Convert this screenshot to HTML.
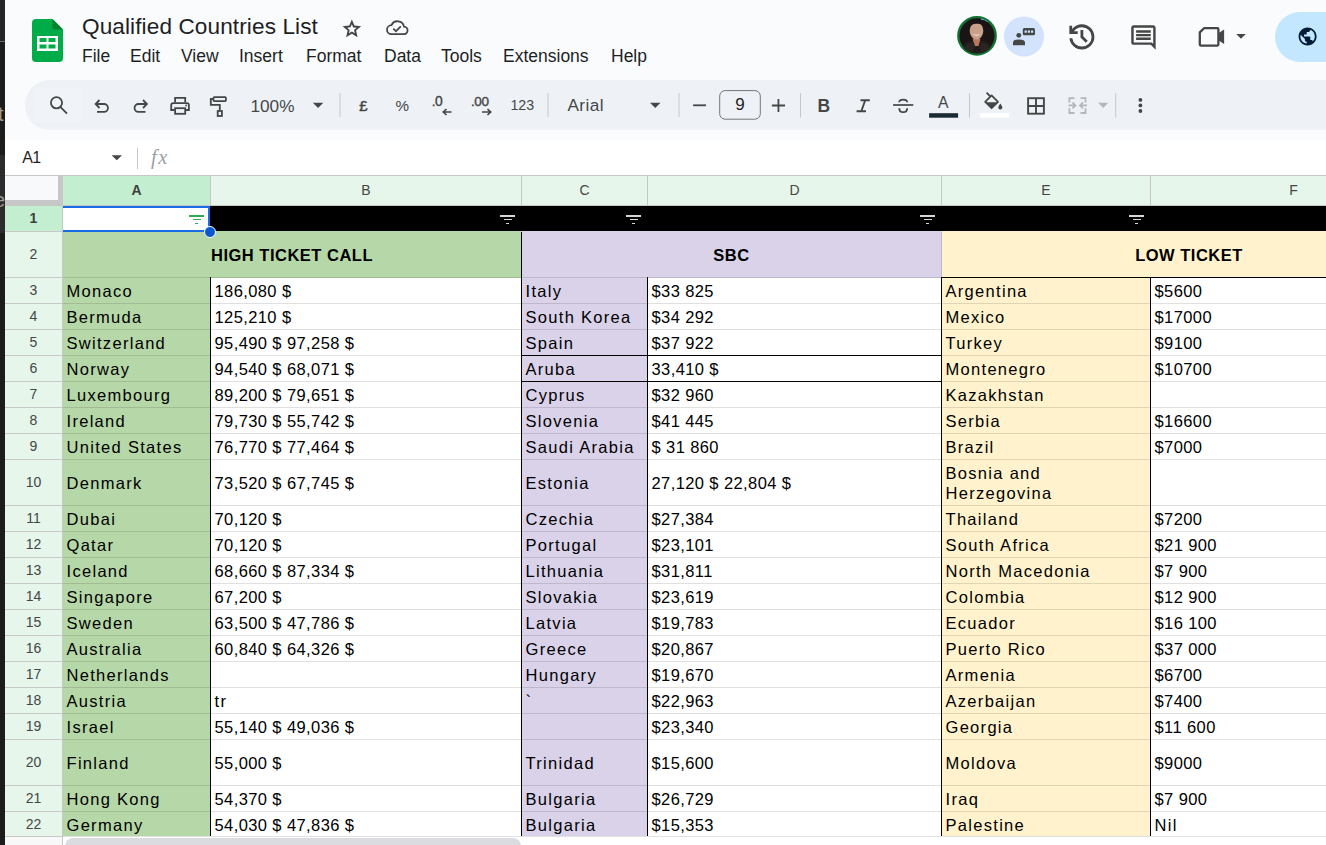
<!DOCTYPE html>
<html><head><meta charset="utf-8"><style>
*{margin:0;padding:0;box-sizing:border-box}
html,body{width:1326px;height:845px;overflow:hidden;background:#f9fbfd;font-family:"Liberation Sans",sans-serif;color:#1f1f1f;position:relative}
.abs{position:absolute}
#strip{position:absolute;left:0;top:0;width:5px;height:845px;background:#1c1c1c;overflow:hidden}
#title{position:absolute;left:82px;top:13.3px;font-size:22.6px;line-height:28px;color:#1f1f1f;white-space:nowrap;letter-spacing:0.1px}
.menu{position:absolute;top:45px;font-size:17.5px;line-height:22px;color:#1f1f1f;white-space:nowrap}
#toolbar{position:absolute;left:25px;top:80px;width:1400px;height:49.6px;border-radius:24.8px;background:#eef2f7}
.sep{position:absolute;top:93px;width:1px;height:24px;background:#c7c7c7}
.ic{position:absolute}
#fbar{position:absolute;left:5px;top:140px;width:1321px;height:35px;background:#fff}
#grid{position:absolute;left:0;top:0;width:1326px;height:845px}
.colhdr-bg{position:absolute;left:5px;top:175px;width:1321px;height:31px;background:#e6f6eb;border-top:1px solid #c7c7c7;border-bottom:1px solid #c7c7c7}
.ch{position:absolute;top:176px;height:29px;line-height:29px;text-align:center;font-size:14px;color:#444746;background:#e6f6eb}
.ch.sel{background:#c4eed0;color:#3c4043;font-weight:bold}
.vl{position:absolute;width:1px}
.hdrl{top:176px;height:29px;background:#c7c7c7}
.corner{position:absolute;left:5px;top:176px;width:58px;height:30px;background:#c7c7c7}
.corner:after{content:"";position:absolute;left:0;top:0;width:53px;height:24px;background:#f8f9fa}
.rh{position:absolute;left:5px;width:57px;text-align:center;font-size:14px;color:#444746;background:#e6f6eb}
.rh.sel{background:#c4eed0;color:#3c4043;font-weight:bold}
.hl{position:absolute;height:1px}
.rhl{left:5px;width:58px;background:#c7c7c7}
.cell{position:absolute;overflow:hidden;white-space:nowrap}
.tx{padding-left:3.5px;padding-top:1px;font-size:16.5px;letter-spacing:1.3px;color:#000}
.hdr{text-align:center;font-weight:bold;font-size:16.5px;letter-spacing:0.5px;color:#000;padding-top:1px}
.glv{position:absolute;width:1px;background:rgba(0,0,0,0.12)}
.glh{position:absolute;height:1px;background:rgba(0,0,0,0.12)}
.bk{position:absolute;background:#000}
.filt{position:absolute;width:15px;height:10px}
.filt i{position:absolute;height:1.4px;display:block}
.selbox{position:absolute;border:2px solid #1a73e8;box-sizing:content-box}
.handle{position:absolute;width:12px;height:12px;border-radius:50%;background:#0b57d0;border:1.5px solid #fff;box-sizing:border-box}
.hscroll{position:absolute;left:63px;width:1263px;height:20px;background:#fff;border-top:1px solid #e1e1e1}
.rhbot{position:absolute;left:5px;width:58px;height:20px;background:#f8f8f8;border-top:1px solid #c7c7c7;border-right:1px solid #c7c7c7}
.thumb{position:absolute;left:65px;width:456px;height:16px;border-radius:8px;background:#dadce0}

</style></head><body>
<div id="strip"><div style="position:absolute;left:0;top:0;width:5px;height:41px;background:#262626"></div><div style="position:absolute;left:0;top:41px;width:5px;height:1px;background:#6a6a6a"></div><div style="position:absolute;left:0;top:155px;width:5px;height:78px;background:#2c2c2c"></div><div style="position:absolute;left:-2px;top:102px;font-size:20px;line-height:24px;color:#9a9a9a">t</div><div style="position:absolute;left:-6px;top:188px;font-size:20px;line-height:24px;color:#9a9a9a">e</div></div>
<div id="toolbar"></div>
<div style="position:absolute;left:35px;top:88px;width:48px;height:34px;background:#f0f4f9"></div>
<div id="fbar"></div>
<svg style="position:absolute;left:0;top:0" width="1326" height="175" viewBox="0 0 1326 175">
<!-- logo -->
<path d="M36 19H52.5L63 29.5V58A4 4 0 0 1 59 62H36A4 4 0 0 1 32 58V23A4 4 0 0 1 36 19Z" fill="#00ac47"/>
<path d="M52.5 19L63 29.5H52.5Z" fill="#00832d"/>
<rect x="37" y="36" width="21" height="15" fill="#fff"/>
<rect x="39.5" y="38" width="7" height="4" fill="#00ac47"/><rect x="48.5" y="38" width="7" height="4" fill="#00ac47"/>
<rect x="39.5" y="44.5" width="7" height="4" fill="#00ac47"/><rect x="48.5" y="44.5" width="7" height="4" fill="#00ac47"/>
<!-- star -->
<path transform="translate(340.7,17.6) scale(0.93)" fill="#444746" d="m8.85 16.825 3.15-1.9 3.15 1.925-.825-3.6 2.775-2.4-3.65-.325-1.45-3.4-1.45 3.375-3.65.325 2.775 2.425ZM5.825 21l1.625-7.025L2 9.25l7.2-.625L12 2l2.8 6.625 7.2.625-5.450 4.725L18.175 21 12 17.275Z"/>
<!-- cloud -->
<path d="M391.5 34.2H403.5A3.8 3.8 0 0 0 404 26.6A6.6 6.6 0 0 0 391.5 25.2A4.5 4.5 0 0 0 391.5 34.2Z" fill="none" stroke="#444746" stroke-width="1.8"/>
<path d="M393.3 28.6L396 31.2L400.8 26.4" fill="none" stroke="#444746" stroke-width="1.7"/>
<!-- avatar -->
<defs><clipPath id="avc"><circle cx="977" cy="35.8" r="17.8"/></clipPath></defs>
<circle cx="977" cy="35.8" r="18.7" fill="#1a1514" stroke="#137333" stroke-width="2.3"/>
<g clip-path="url(#avc)">
<path d="M958 58Q959 45 968 41.5Q977 39 986 41.5Q995 45 996 58Z" fill="#211b1a"/>
<path d="M963 50Q966 43 972 42L975 47L970 56Z" fill="#2a2422"/>
<path d="M991 50Q988 43 982 42L979 47L984 56Z" fill="#2a2422"/>
<path d="M972.5 39L980.5 39L978.5 46L975 46Z" fill="#b8775a"/>
<ellipse cx="976.5" cy="30.8" rx="6.8" ry="8.8" fill="#c9a089"/>
<path d="M969.2 29Q968 19.5 976.5 19.2Q985 19.5 983.8 29Q982.5 23.5 977 23.8Q971 23.5 969.2 29Z" fill="#1b1414"/>
<path d="M972.5 34Q976.5 37.5 980.5 34Q976.5 35.5 972.5 34Z" fill="#f4ece6"/>
<path d="M981 18.8Q985 18.5 987.8 21.5" stroke="#6fb2ec" stroke-width="1.8" fill="none"/>
</g>
<!-- chip -->
<circle cx="1024" cy="36.5" r="20" fill="#d3e3fd"/>
<circle cx="1018.8" cy="35.3" r="2.4" fill="#444746"/>
<path d="M1013 45.3V42.5Q1013 39.5 1019 39.5Q1025 39.5 1025 42.5V45.3Z" fill="#444746"/>
<rect x="1022.8" y="28.1" width="12.2" height="7.2" rx="1.5" fill="#444746"/>
<rect x="1024.6" y="30.5" width="2.2" height="2.2" fill="#d3e3fd"/><rect x="1027.8" y="30.5" width="2.2" height="2.2" fill="#d3e3fd"/><rect x="1031" y="30.5" width="2.2" height="2.2" fill="#d3e3fd"/>
<!-- history -->
<path transform="translate(1065.2,20.2) scale(1.39)" fill="#444746" d="M12 21q-3.45 0-6.012-2.288T3.050 13H5.1q.35 2.6 2.313 4.3T12 19q2.925 0 4.963-2.037T19 12q0-2.925-2.037-4.962T12 5q-1.725 0-3.225.8T6.25 8H9v2H3V4h2v2.35q1.275-1.6 3.113-2.475T12 3q1.875 0 3.513.713t2.85 1.924q1.212 1.213 1.925 2.85T21 12q0 1.875-.712 3.513t-1.925 2.85q-1.213 1.212-2.85 1.925T12 21Zm2.8-4.8L11 12.4V7h2v4.6l3.2 3.2Z"/>
<!-- comment -->
<path transform="translate(1128.8,22.9) scale(1.22)" fill="#444746" d="M21.99 4c0-1.1-.89-2-1.99-2H4c-1.1 0-2 .9-2 2v12c0 1.1.9 2 2 2h14l4 4-.01-18zM20 4v13.17L18.83 16H4V4h16zM6 12h12v2H6zm0-3h12v2H6zm0-3h12v2H6z"/>
<!-- video -->
<path d="M1204 28.2H1217.4Q1218.4 28.2 1218.4 29.2V44.6Q1218.4 45.6 1217.4 45.6H1200.8Q1199.8 45.6 1199.8 44.6V32.4Z" fill="none" stroke="#444746" stroke-width="2.3" stroke-linejoin="round"/>
<path d="M1218 33.5L1224.1 29.5V44L1218 40Z" fill="#444746"/>
<path d="M1236.2 33.9H1245.8L1241 38.8Z" fill="#444746"/>
<!-- share -->
<rect x="1275" y="12" width="120" height="50" rx="25" fill="#c2e7ff"/>
<path transform="translate(1296.8,25.6) scale(0.9)" fill="#001d35" d="M12 2C6.48 2 2 6.48 2 12s4.48 10 10 10 10-4.48 10-10S17.52 2 12 2zm-1 17.93c-3.95-.49-7-3.85-7-7.930 0-.62.08-1.21.21-1.79L9 15v1c0 1.1.9 2 2 2v1.93zm6.9-2.54c-.26-.81-1-1.39-1.9-1.390h-1v-3c0-.55-.45-1-1-1H8v-2h2c.55 0 1-.45 1-1V7h2c1.1 0 2-.9 2-2v-.41c2.93 1.19 5 4.06 5 7.41 0 2.08-.8 3.97-2.1 5.39z"/>
<!-- toolbar icons -->
<g fill="none" stroke="#444746" stroke-width="1.8">
<circle cx="56.5" cy="102.8" r="5.6"/>
<path d="M60.6 107.2L67 113.6"/>
<path d="M99.5 100L95.6 104L99.5 108M95.6 104H104A3.9 3.9 0 0 1 104 111.9H97"/>
<path d="M143 100L146.9 104L143 108M146.9 104H138.5A3.9 3.9 0 0 0 138.5 111.9H145.5"/>
<path d="M175.1 102.3V97.9H185.2V102.3"/>
<path d="M174.4 110H171.2V105.2Q171.2 103.2 173.2 103.2H187Q188.9 103.2 188.9 105.2V110H185.8"/>
<rect x="175.1" y="108.2" width="10.1" height="5.6"/>
<rect x="213.5" y="97.1" width="12.4" height="4" rx="0.8"/>
<path d="M213 99H210.8V104.8H219.8V110.2"/>
<rect x="217.7" y="111" width="4.2" height="5"/>
</g>
<circle cx="186.1" cy="105.5" r="0.9" fill="#444746"/>
<text x="250.5" y="112" font-family="Liberation Sans" font-size="17.2" fill="#444746">100%</text>
<path d="M312.8 102.8H323.3L318.05 108.1Z" fill="#444746"/>
<rect x="339.5" y="93" width="1" height="24" fill="#c7c7c7"/>
<text x="363.5" y="110.6" font-family="Liberation Sans" font-size="15" text-anchor="middle" fill="#444746" stroke="#444746" stroke-width="0.5">£</text>
<text x="402.3" y="110.8" font-family="Liberation Sans" font-size="15.2" text-anchor="middle" fill="#444746">%</text>
<text x="431.8" y="106.3" font-family="Liberation Sans" font-size="13.5" fill="#444746" stroke="#444746" stroke-width="0.4"><tspan>.</tspan><tspan dx="-0.6" font-size="13.8">0</tspan></text>
<path d="M451.5 112H443.5M446.5 109L443.3 112L446.5 115" fill="none" stroke="#444746" stroke-width="1.7"/>
<text x="471" y="106.3" font-family="Liberation Sans" font-size="13.5" fill="#444746" stroke="#444746" stroke-width="0.4" letter-spacing="-0.4">.00</text>
<path d="M482 112H490.5M487.5 109L490.7 112L487.5 115" fill="none" stroke="#444746" stroke-width="1.7"/>
<text x="522.3" y="110" font-family="Liberation Sans" font-size="14.2" text-anchor="middle" fill="#444746">123</text>
<rect x="547.5" y="93" width="1" height="24" fill="#c7c7c7"/>
<text x="567.5" y="111" font-family="Liberation Sans" font-size="17.2" letter-spacing="0.4" fill="#444746">Arial</text>
<path d="M650 102.8H660.5L655.25 108.1Z" fill="#444746"/>
<rect x="678.5" y="93" width="1" height="24" fill="#c7c7c7"/>
<rect x="693.1" y="104.4" width="12.9" height="1.8" fill="#444746"/>
<rect x="719.7" y="90.6" width="40.6" height="28.6" rx="5.4" fill="none" stroke="#747775" stroke-width="1"/>
<text x="740" y="110.3" font-family="Liberation Sans" font-size="17" text-anchor="middle" fill="#1f1f1f">9</text>
<path d="M771.9 105.5H785M778.45 99.1V112" stroke="#444746" stroke-width="1.8"/>
<rect x="800" y="93" width="1" height="24.5" fill="#c7c7c7"/>
<text x="823.8" y="112.2" font-family="Liberation Sans" font-size="17.5" font-weight="bold" text-anchor="middle" fill="#444746">B</text>
<path d="M860.5 100.3H869.8M856.6 111.3H866M865.2 100.3L861.3 111.3" fill="none" stroke="#444746" stroke-width="1.9"/>
<path d="M893.1 105H913.3" stroke="#444746" stroke-width="1.7"/>
<path d="M899.2 102.3Q899.2 99.6 903.2 99.6Q907.2 99.6 907.2 102.3M899.2 108.2Q899.2 112.2 903.2 112.2Q907.2 112.2 907.2 108.2" fill="none" stroke="#444746" stroke-width="1.8"/>
<text x="943.3" y="108.3" font-family="Liberation Sans" font-size="15.8" text-anchor="middle" fill="#444746">A</text>
<rect x="929.1" y="113.2" width="29" height="4.5" fill="#1c2b33"/>
<rect x="969" y="93" width="1" height="24.5" fill="#c7c7c7"/>
<path d="M986.6 92.6L990.2 96.4" stroke="#444746" stroke-width="1.8"/>
<path d="M985.2 101.8L991.6 95.4L998 101.8L991.6 108.2Z" fill="none" stroke="#444746" stroke-width="1.8" stroke-linejoin="round"/>
<path d="M985.4 102.2H997.8L991.6 108.4Z" fill="#444746"/>
<path d="M1000.3 103.6Q1002.3 106.3 1002.3 107.4A2 2 0 0 1 998.3 107.4Q998.3 106.3 1000.3 103.6Z" fill="#444746"/>
<rect x="979.8" y="113.2" width="29.4" height="4.5" fill="#ffffff"/>
<rect x="1028.1" y="98.2" width="15.8" height="15.5" fill="none" stroke="#444746" stroke-width="1.9"/>
<path d="M1036 98.2V113.7M1028.1 106H1043.9" stroke="#444746" stroke-width="1.9"/>
<path d="M1074.5 98.2H1069.4V102.6M1069.4 108.2V113H1074.5M1080.5 98.2H1085.5V102.6M1085.5 108.2V113H1080.5" fill="none" stroke="#b4b7b9" stroke-width="1.8"/>
<path d="M1068.6 105.4H1075.5M1072.5 102.4L1075.5 105.4L1072.5 108.4M1087 105.4H1080M1083 102.4L1080 105.4L1083 108.4" fill="none" stroke="#b4b7b9" stroke-width="1.7"/>
<path d="M1098.1 102.8H1108.2L1103.15 108.1Z" fill="#b4b7b9"/>
<rect x="1115.2" y="93" width="1" height="24.6" fill="#c7c7c7"/>
<circle cx="1140.4" cy="99.9" r="1.9" fill="#444746"/><circle cx="1140.4" cy="105.4" r="1.9" fill="#444746"/><circle cx="1140.4" cy="111" r="1.9" fill="#444746"/>
<!-- formula bar -->
<text x="22.3" y="163" font-family="Liberation Sans" font-size="16" letter-spacing="-0.6" fill="#1f1f1f">A1</text>
<path d="M111.6 155.3H122L116.8 160.3Z" fill="#444746"/>
<rect x="137" y="148" width="1" height="21" fill="#c7c7c7"/>
<text x="151" y="163.6" font-family="Liberation Serif" font-size="20.5" font-style="italic" letter-spacing="1.6" fill="#9aa0a6">fx</text>
</svg>
<div id="title">Qualified Countries List</div>
<div class="menu" style="left:82px">File</div>
<div class="menu" style="left:130px">Edit</div>
<div class="menu" style="left:181px">View</div>
<div class="menu" style="left:239px">Insert</div>
<div class="menu" style="left:306px">Format</div>
<div class="menu" style="left:384px">Data</div>
<div class="menu" style="left:441px">Tools</div>
<div class="menu" style="left:503px">Extensions</div>
<div class="menu" style="left:611px">Help</div>

<div id="grid"><div class="colhdr-bg"></div><div class="ch sel" style="left:63px;width:147px">A</div><div class="vl hdrl" style="left:210px"></div><div class="ch" style="left:211px;width:310px">B</div><div class="vl hdrl" style="left:521px"></div><div class="ch" style="left:522px;width:125px">C</div><div class="vl hdrl" style="left:647px"></div><div class="ch" style="left:648px;width:293px">D</div><div class="vl hdrl" style="left:941px"></div><div class="ch" style="left:942px;width:208px">E</div><div class="vl hdrl" style="left:1150px"></div><div class="ch" style="left:1151px;width:285px">F</div><div class="vl hdrl" style="left:1436px"></div><div class="corner"></div><div class="rh sel" style="top:206px;height:25px;line-height:25px">1</div><div class="hl rhl" style="top:231px"></div><div class="rh" style="top:232px;height:45px;line-height:45px">2</div><div class="hl rhl" style="top:277px"></div><div class="rh" style="top:278px;height:25px;line-height:25px">3</div><div class="hl rhl" style="top:303px"></div><div class="rh" style="top:304px;height:25px;line-height:25px">4</div><div class="hl rhl" style="top:329px"></div><div class="rh" style="top:330px;height:25px;line-height:25px">5</div><div class="hl rhl" style="top:355px"></div><div class="rh" style="top:356px;height:25px;line-height:25px">6</div><div class="hl rhl" style="top:381px"></div><div class="rh" style="top:382px;height:25px;line-height:25px">7</div><div class="hl rhl" style="top:407px"></div><div class="rh" style="top:408px;height:25px;line-height:25px">8</div><div class="hl rhl" style="top:433px"></div><div class="rh" style="top:434px;height:25px;line-height:25px">9</div><div class="hl rhl" style="top:459px"></div><div class="rh" style="top:460px;height:45px;line-height:45px">10</div><div class="hl rhl" style="top:505px"></div><div class="rh" style="top:506px;height:25px;line-height:25px">11</div><div class="hl rhl" style="top:531px"></div><div class="rh" style="top:532px;height:25px;line-height:25px">12</div><div class="hl rhl" style="top:557px"></div><div class="rh" style="top:558px;height:25px;line-height:25px">13</div><div class="hl rhl" style="top:583px"></div><div class="rh" style="top:584px;height:25px;line-height:25px">14</div><div class="hl rhl" style="top:609px"></div><div class="rh" style="top:610px;height:25px;line-height:25px">15</div><div class="hl rhl" style="top:635px"></div><div class="rh" style="top:636px;height:25px;line-height:25px">16</div><div class="hl rhl" style="top:661px"></div><div class="rh" style="top:662px;height:25px;line-height:25px">17</div><div class="hl rhl" style="top:687px"></div><div class="rh" style="top:688px;height:25px;line-height:25px">18</div><div class="hl rhl" style="top:713px"></div><div class="rh" style="top:714px;height:25px;line-height:25px">19</div><div class="hl rhl" style="top:739px"></div><div class="rh" style="top:740px;height:45px;line-height:45px">20</div><div class="hl rhl" style="top:785px"></div><div class="rh" style="top:786px;height:25px;line-height:25px">21</div><div class="hl rhl" style="top:811px"></div><div class="rh" style="top:812px;height:25px;line-height:25px">22</div><div class="hl rhl" style="top:837px"></div><div class="bk" style="left:62px;top:206px;width:1px;height:630px;background:#c7c7c7"></div><div class="cell" style="left:63px;top:206px;width:1263px;height:26px;background:#000"></div><div class="cell" style="left:63px;top:206px;width:147px;height:25px;background:#fff"></div><div class="filt" style="left:189px;top:215px"><i style="background:#34a853;left:0;width:15px;top:0.3px"></i><i style="background:#34a853;left:3.5px;width:8.5px;top:3.8px"></i><i style="background:#34a853;left:6.3px;width:2.8px;top:7.6px"></i></div><div class="filt" style="left:500px;top:215px"><i style="background:#d6d6d6;left:0;width:15px;top:0.3px"></i><i style="background:#d6d6d6;left:3.5px;width:8.5px;top:3.8px"></i><i style="background:#d6d6d6;left:6.3px;width:2.8px;top:7.6px"></i></div><div class="filt" style="left:626px;top:215px"><i style="background:#d6d6d6;left:0;width:15px;top:0.3px"></i><i style="background:#d6d6d6;left:3.5px;width:8.5px;top:3.8px"></i><i style="background:#d6d6d6;left:6.3px;width:2.8px;top:7.6px"></i></div><div class="filt" style="left:920px;top:215px"><i style="background:#d6d6d6;left:0;width:15px;top:0.3px"></i><i style="background:#d6d6d6;left:3.5px;width:8.5px;top:3.8px"></i><i style="background:#d6d6d6;left:6.3px;width:2.8px;top:7.6px"></i></div><div class="filt" style="left:1129px;top:215px"><i style="background:#d6d6d6;left:0;width:15px;top:0.3px"></i><i style="background:#d6d6d6;left:3.5px;width:8.5px;top:3.8px"></i><i style="background:#d6d6d6;left:6.3px;width:2.8px;top:7.6px"></i></div><div class="cell" style="left:63px;top:231px;width:459px;height:47px;background:#b6d7a8"></div><div class="cell hdr" style="left:63px;top:232px;width:458px;height:45px;line-height:45px">HIGH TICKET CALL</div><div class="glv" style="left:521px;top:232px;height:46px"></div><div class="cell" style="left:522px;top:231px;width:420px;height:47px;background:#d9d2e9"></div><div class="cell hdr" style="left:522px;top:232px;width:419px;height:45px;line-height:45px">SBC</div><div class="glv" style="left:941px;top:232px;height:46px"></div><div class="cell" style="left:942px;top:231px;width:495px;height:47px;background:#fff2cc"></div><div class="cell hdr" style="left:942px;top:232px;width:494px;height:45px;line-height:45px">LOW TICKET</div><div class="glv" style="left:1436px;top:232px;height:46px"></div><div class="glh" style="left:63px;top:277px;width:1263px"></div><div class="cell" style="left:63px;top:278px;width:148px;height:26px;background:#b6d7a8"></div><div class="cell tx" style="left:63px;top:278px;width:147px;height:25px;line-height:25px;">Monaco</div><div class="glv" style="left:210px;top:278px;height:26px"></div><div class="cell" style="left:211px;top:278px;width:311px;height:26px;background:#ffffff"></div><div class="cell tx" style="left:211px;top:278px;width:310px;height:25px;line-height:25px;letter-spacing:0.4px;">186,080 $</div><div class="glv" style="left:521px;top:278px;height:26px"></div><div class="cell" style="left:522px;top:278px;width:126px;height:26px;background:#d9d2e9"></div><div class="cell tx" style="left:522px;top:278px;width:125px;height:25px;line-height:25px;">Italy</div><div class="glv" style="left:647px;top:278px;height:26px"></div><div class="cell" style="left:648px;top:278px;width:294px;height:26px;background:#ffffff"></div><div class="cell tx" style="left:648px;top:278px;width:293px;height:25px;line-height:25px;letter-spacing:0.4px;">$33 825</div><div class="glv" style="left:941px;top:278px;height:26px"></div><div class="cell" style="left:942px;top:278px;width:209px;height:26px;background:#fff2cc"></div><div class="cell tx" style="left:942px;top:278px;width:208px;height:25px;line-height:25px;">Argentina</div><div class="glv" style="left:1150px;top:278px;height:26px"></div><div class="cell" style="left:1151px;top:278px;width:286px;height:26px;background:#ffffff"></div><div class="cell tx" style="left:1151px;top:278px;width:285px;height:25px;line-height:25px;letter-spacing:0.4px;">$5600</div><div class="glv" style="left:1436px;top:278px;height:26px"></div><div class="glh" style="left:63px;top:303px;width:1263px"></div><div class="cell" style="left:63px;top:304px;width:148px;height:26px;background:#b6d7a8"></div><div class="cell tx" style="left:63px;top:304px;width:147px;height:25px;line-height:25px;">Bermuda</div><div class="glv" style="left:210px;top:304px;height:26px"></div><div class="cell" style="left:211px;top:304px;width:311px;height:26px;background:#ffffff"></div><div class="cell tx" style="left:211px;top:304px;width:310px;height:25px;line-height:25px;letter-spacing:0.4px;">125,210 $</div><div class="glv" style="left:521px;top:304px;height:26px"></div><div class="cell" style="left:522px;top:304px;width:126px;height:26px;background:#d9d2e9"></div><div class="cell tx" style="left:522px;top:304px;width:125px;height:25px;line-height:25px;">South Korea</div><div class="glv" style="left:647px;top:304px;height:26px"></div><div class="cell" style="left:648px;top:304px;width:294px;height:26px;background:#ffffff"></div><div class="cell tx" style="left:648px;top:304px;width:293px;height:25px;line-height:25px;letter-spacing:0.4px;">$34 292</div><div class="glv" style="left:941px;top:304px;height:26px"></div><div class="cell" style="left:942px;top:304px;width:209px;height:26px;background:#fff2cc"></div><div class="cell tx" style="left:942px;top:304px;width:208px;height:25px;line-height:25px;">Mexico</div><div class="glv" style="left:1150px;top:304px;height:26px"></div><div class="cell" style="left:1151px;top:304px;width:286px;height:26px;background:#ffffff"></div><div class="cell tx" style="left:1151px;top:304px;width:285px;height:25px;line-height:25px;letter-spacing:0.4px;">$17000</div><div class="glv" style="left:1436px;top:304px;height:26px"></div><div class="glh" style="left:63px;top:329px;width:1263px"></div><div class="cell" style="left:63px;top:330px;width:148px;height:26px;background:#b6d7a8"></div><div class="cell tx" style="left:63px;top:330px;width:147px;height:25px;line-height:25px;">Switzerland</div><div class="glv" style="left:210px;top:330px;height:26px"></div><div class="cell" style="left:211px;top:330px;width:311px;height:26px;background:#ffffff"></div><div class="cell tx" style="left:211px;top:330px;width:310px;height:25px;line-height:25px;letter-spacing:0.4px;">95,490 $ 97,258 $</div><div class="glv" style="left:521px;top:330px;height:26px"></div><div class="cell" style="left:522px;top:330px;width:126px;height:26px;background:#d9d2e9"></div><div class="cell tx" style="left:522px;top:330px;width:125px;height:25px;line-height:25px;">Spain</div><div class="glv" style="left:647px;top:330px;height:26px"></div><div class="cell" style="left:648px;top:330px;width:294px;height:26px;background:#ffffff"></div><div class="cell tx" style="left:648px;top:330px;width:293px;height:25px;line-height:25px;letter-spacing:0.4px;">$37 922</div><div class="glv" style="left:941px;top:330px;height:26px"></div><div class="cell" style="left:942px;top:330px;width:209px;height:26px;background:#fff2cc"></div><div class="cell tx" style="left:942px;top:330px;width:208px;height:25px;line-height:25px;">Turkey</div><div class="glv" style="left:1150px;top:330px;height:26px"></div><div class="cell" style="left:1151px;top:330px;width:286px;height:26px;background:#ffffff"></div><div class="cell tx" style="left:1151px;top:330px;width:285px;height:25px;line-height:25px;letter-spacing:0.4px;">$9100</div><div class="glv" style="left:1436px;top:330px;height:26px"></div><div class="glh" style="left:63px;top:355px;width:1263px"></div><div class="cell" style="left:63px;top:356px;width:148px;height:26px;background:#b6d7a8"></div><div class="cell tx" style="left:63px;top:356px;width:147px;height:25px;line-height:25px;">Norway</div><div class="glv" style="left:210px;top:356px;height:26px"></div><div class="cell" style="left:211px;top:356px;width:311px;height:26px;background:#ffffff"></div><div class="cell tx" style="left:211px;top:356px;width:310px;height:25px;line-height:25px;letter-spacing:0.4px;">94,540 $ 68,071 $</div><div class="glv" style="left:521px;top:356px;height:26px"></div><div class="cell" style="left:522px;top:356px;width:126px;height:26px;background:#d9d2e9"></div><div class="cell tx" style="left:522px;top:356px;width:125px;height:25px;line-height:25px;">Aruba</div><div class="glv" style="left:647px;top:356px;height:26px"></div><div class="cell" style="left:648px;top:356px;width:294px;height:26px;background:#ffffff"></div><div class="cell tx" style="left:648px;top:356px;width:293px;height:25px;line-height:25px;letter-spacing:0.4px;">33,410 $</div><div class="glv" style="left:941px;top:356px;height:26px"></div><div class="cell" style="left:942px;top:356px;width:209px;height:26px;background:#fff2cc"></div><div class="cell tx" style="left:942px;top:356px;width:208px;height:25px;line-height:25px;">Montenegro</div><div class="glv" style="left:1150px;top:356px;height:26px"></div><div class="cell" style="left:1151px;top:356px;width:286px;height:26px;background:#ffffff"></div><div class="cell tx" style="left:1151px;top:356px;width:285px;height:25px;line-height:25px;letter-spacing:0.4px;">$10700</div><div class="glv" style="left:1436px;top:356px;height:26px"></div><div class="glh" style="left:63px;top:381px;width:1263px"></div><div class="cell" style="left:63px;top:382px;width:148px;height:26px;background:#b6d7a8"></div><div class="cell tx" style="left:63px;top:382px;width:147px;height:25px;line-height:25px;">Luxembourg</div><div class="glv" style="left:210px;top:382px;height:26px"></div><div class="cell" style="left:211px;top:382px;width:311px;height:26px;background:#ffffff"></div><div class="cell tx" style="left:211px;top:382px;width:310px;height:25px;line-height:25px;letter-spacing:0.4px;">89,200 $ 79,651 $</div><div class="glv" style="left:521px;top:382px;height:26px"></div><div class="cell" style="left:522px;top:382px;width:126px;height:26px;background:#d9d2e9"></div><div class="cell tx" style="left:522px;top:382px;width:125px;height:25px;line-height:25px;">Cyprus</div><div class="glv" style="left:647px;top:382px;height:26px"></div><div class="cell" style="left:648px;top:382px;width:294px;height:26px;background:#ffffff"></div><div class="cell tx" style="left:648px;top:382px;width:293px;height:25px;line-height:25px;letter-spacing:0.4px;">$32 960</div><div class="glv" style="left:941px;top:382px;height:26px"></div><div class="cell" style="left:942px;top:382px;width:209px;height:26px;background:#fff2cc"></div><div class="cell tx" style="left:942px;top:382px;width:208px;height:25px;line-height:25px;">Kazakhstan</div><div class="glv" style="left:1150px;top:382px;height:26px"></div><div class="cell" style="left:1151px;top:382px;width:286px;height:26px;background:#ffffff"></div><div class="cell tx" style="left:1151px;top:382px;width:285px;height:25px;line-height:25px;"></div><div class="glv" style="left:1436px;top:382px;height:26px"></div><div class="glh" style="left:63px;top:407px;width:1263px"></div><div class="cell" style="left:63px;top:408px;width:148px;height:26px;background:#b6d7a8"></div><div class="cell tx" style="left:63px;top:408px;width:147px;height:25px;line-height:25px;">Ireland</div><div class="glv" style="left:210px;top:408px;height:26px"></div><div class="cell" style="left:211px;top:408px;width:311px;height:26px;background:#ffffff"></div><div class="cell tx" style="left:211px;top:408px;width:310px;height:25px;line-height:25px;letter-spacing:0.4px;">79,730 $ 55,742 $</div><div class="glv" style="left:521px;top:408px;height:26px"></div><div class="cell" style="left:522px;top:408px;width:126px;height:26px;background:#d9d2e9"></div><div class="cell tx" style="left:522px;top:408px;width:125px;height:25px;line-height:25px;">Slovenia</div><div class="glv" style="left:647px;top:408px;height:26px"></div><div class="cell" style="left:648px;top:408px;width:294px;height:26px;background:#ffffff"></div><div class="cell tx" style="left:648px;top:408px;width:293px;height:25px;line-height:25px;letter-spacing:0.4px;">$41 445</div><div class="glv" style="left:941px;top:408px;height:26px"></div><div class="cell" style="left:942px;top:408px;width:209px;height:26px;background:#fff2cc"></div><div class="cell tx" style="left:942px;top:408px;width:208px;height:25px;line-height:25px;">Serbia</div><div class="glv" style="left:1150px;top:408px;height:26px"></div><div class="cell" style="left:1151px;top:408px;width:286px;height:26px;background:#ffffff"></div><div class="cell tx" style="left:1151px;top:408px;width:285px;height:25px;line-height:25px;letter-spacing:0.4px;">$16600</div><div class="glv" style="left:1436px;top:408px;height:26px"></div><div class="glh" style="left:63px;top:433px;width:1263px"></div><div class="cell" style="left:63px;top:434px;width:148px;height:26px;background:#b6d7a8"></div><div class="cell tx" style="left:63px;top:434px;width:147px;height:25px;line-height:25px;">United States</div><div class="glv" style="left:210px;top:434px;height:26px"></div><div class="cell" style="left:211px;top:434px;width:311px;height:26px;background:#ffffff"></div><div class="cell tx" style="left:211px;top:434px;width:310px;height:25px;line-height:25px;letter-spacing:0.4px;">76,770 $ 77,464 $</div><div class="glv" style="left:521px;top:434px;height:26px"></div><div class="cell" style="left:522px;top:434px;width:126px;height:26px;background:#d9d2e9"></div><div class="cell tx" style="left:522px;top:434px;width:125px;height:25px;line-height:25px;">Saudi Arabia</div><div class="glv" style="left:647px;top:434px;height:26px"></div><div class="cell" style="left:648px;top:434px;width:294px;height:26px;background:#ffffff"></div><div class="cell tx" style="left:648px;top:434px;width:293px;height:25px;line-height:25px;letter-spacing:0.4px;">$ 31 860</div><div class="glv" style="left:941px;top:434px;height:26px"></div><div class="cell" style="left:942px;top:434px;width:209px;height:26px;background:#fff2cc"></div><div class="cell tx" style="left:942px;top:434px;width:208px;height:25px;line-height:25px;">Brazil</div><div class="glv" style="left:1150px;top:434px;height:26px"></div><div class="cell" style="left:1151px;top:434px;width:286px;height:26px;background:#ffffff"></div><div class="cell tx" style="left:1151px;top:434px;width:285px;height:25px;line-height:25px;letter-spacing:0.4px;">$7000</div><div class="glv" style="left:1436px;top:434px;height:26px"></div><div class="glh" style="left:63px;top:459px;width:1263px"></div><div class="cell" style="left:63px;top:460px;width:148px;height:46px;background:#b6d7a8"></div><div class="cell tx" style="left:63px;top:460px;width:147px;height:45px;line-height:45px;">Denmark</div><div class="glv" style="left:210px;top:460px;height:46px"></div><div class="cell" style="left:211px;top:460px;width:311px;height:46px;background:#ffffff"></div><div class="cell tx" style="left:211px;top:460px;width:310px;height:45px;line-height:45px;letter-spacing:0.4px;">73,520 $ 67,745 $</div><div class="glv" style="left:521px;top:460px;height:46px"></div><div class="cell" style="left:522px;top:460px;width:126px;height:46px;background:#d9d2e9"></div><div class="cell tx" style="left:522px;top:460px;width:125px;height:45px;line-height:45px;">Estonia</div><div class="glv" style="left:647px;top:460px;height:46px"></div><div class="cell" style="left:648px;top:460px;width:294px;height:46px;background:#ffffff"></div><div class="cell tx" style="left:648px;top:460px;width:293px;height:45px;line-height:45px;letter-spacing:0.4px;">27,120 $ 22,804 $</div><div class="glv" style="left:941px;top:460px;height:46px"></div><div class="cell" style="left:942px;top:460px;width:209px;height:46px;background:#fff2cc"></div><div class="cell tx" style="left:942px;top:460px;width:208px;height:45px;line-height:45px;line-height:20px;padding-top:2.5px;white-space:normal;">Bosnia and<br>Herzegovina</div><div class="glv" style="left:1150px;top:460px;height:46px"></div><div class="cell" style="left:1151px;top:460px;width:286px;height:46px;background:#ffffff"></div><div class="cell tx" style="left:1151px;top:460px;width:285px;height:45px;line-height:45px;"></div><div class="glv" style="left:1436px;top:460px;height:46px"></div><div class="glh" style="left:63px;top:505px;width:1263px"></div><div class="cell" style="left:63px;top:506px;width:148px;height:26px;background:#b6d7a8"></div><div class="cell tx" style="left:63px;top:506px;width:147px;height:25px;line-height:25px;">Dubai</div><div class="glv" style="left:210px;top:506px;height:26px"></div><div class="cell" style="left:211px;top:506px;width:311px;height:26px;background:#ffffff"></div><div class="cell tx" style="left:211px;top:506px;width:310px;height:25px;line-height:25px;letter-spacing:0.4px;">70,120 $</div><div class="glv" style="left:521px;top:506px;height:26px"></div><div class="cell" style="left:522px;top:506px;width:126px;height:26px;background:#d9d2e9"></div><div class="cell tx" style="left:522px;top:506px;width:125px;height:25px;line-height:25px;">Czechia</div><div class="glv" style="left:647px;top:506px;height:26px"></div><div class="cell" style="left:648px;top:506px;width:294px;height:26px;background:#ffffff"></div><div class="cell tx" style="left:648px;top:506px;width:293px;height:25px;line-height:25px;letter-spacing:0.4px;">$27,384</div><div class="glv" style="left:941px;top:506px;height:26px"></div><div class="cell" style="left:942px;top:506px;width:209px;height:26px;background:#fff2cc"></div><div class="cell tx" style="left:942px;top:506px;width:208px;height:25px;line-height:25px;">Thailand</div><div class="glv" style="left:1150px;top:506px;height:26px"></div><div class="cell" style="left:1151px;top:506px;width:286px;height:26px;background:#ffffff"></div><div class="cell tx" style="left:1151px;top:506px;width:285px;height:25px;line-height:25px;letter-spacing:0.4px;">$7200</div><div class="glv" style="left:1436px;top:506px;height:26px"></div><div class="glh" style="left:63px;top:531px;width:1263px"></div><div class="cell" style="left:63px;top:532px;width:148px;height:26px;background:#b6d7a8"></div><div class="cell tx" style="left:63px;top:532px;width:147px;height:25px;line-height:25px;">Qatar</div><div class="glv" style="left:210px;top:532px;height:26px"></div><div class="cell" style="left:211px;top:532px;width:311px;height:26px;background:#ffffff"></div><div class="cell tx" style="left:211px;top:532px;width:310px;height:25px;line-height:25px;letter-spacing:0.4px;">70,120 $</div><div class="glv" style="left:521px;top:532px;height:26px"></div><div class="cell" style="left:522px;top:532px;width:126px;height:26px;background:#d9d2e9"></div><div class="cell tx" style="left:522px;top:532px;width:125px;height:25px;line-height:25px;">Portugal</div><div class="glv" style="left:647px;top:532px;height:26px"></div><div class="cell" style="left:648px;top:532px;width:294px;height:26px;background:#ffffff"></div><div class="cell tx" style="left:648px;top:532px;width:293px;height:25px;line-height:25px;letter-spacing:0.4px;">$23,101</div><div class="glv" style="left:941px;top:532px;height:26px"></div><div class="cell" style="left:942px;top:532px;width:209px;height:26px;background:#fff2cc"></div><div class="cell tx" style="left:942px;top:532px;width:208px;height:25px;line-height:25px;">South Africa</div><div class="glv" style="left:1150px;top:532px;height:26px"></div><div class="cell" style="left:1151px;top:532px;width:286px;height:26px;background:#ffffff"></div><div class="cell tx" style="left:1151px;top:532px;width:285px;height:25px;line-height:25px;letter-spacing:0.4px;">$21 900</div><div class="glv" style="left:1436px;top:532px;height:26px"></div><div class="glh" style="left:63px;top:557px;width:1263px"></div><div class="cell" style="left:63px;top:558px;width:148px;height:26px;background:#b6d7a8"></div><div class="cell tx" style="left:63px;top:558px;width:147px;height:25px;line-height:25px;">Iceland</div><div class="glv" style="left:210px;top:558px;height:26px"></div><div class="cell" style="left:211px;top:558px;width:311px;height:26px;background:#ffffff"></div><div class="cell tx" style="left:211px;top:558px;width:310px;height:25px;line-height:25px;letter-spacing:0.4px;">68,660 $ 87,334 $</div><div class="glv" style="left:521px;top:558px;height:26px"></div><div class="cell" style="left:522px;top:558px;width:126px;height:26px;background:#d9d2e9"></div><div class="cell tx" style="left:522px;top:558px;width:125px;height:25px;line-height:25px;">Lithuania</div><div class="glv" style="left:647px;top:558px;height:26px"></div><div class="cell" style="left:648px;top:558px;width:294px;height:26px;background:#ffffff"></div><div class="cell tx" style="left:648px;top:558px;width:293px;height:25px;line-height:25px;letter-spacing:0.4px;">$31,811</div><div class="glv" style="left:941px;top:558px;height:26px"></div><div class="cell" style="left:942px;top:558px;width:209px;height:26px;background:#fff2cc"></div><div class="cell tx" style="left:942px;top:558px;width:208px;height:25px;line-height:25px;">North Macedonia</div><div class="glv" style="left:1150px;top:558px;height:26px"></div><div class="cell" style="left:1151px;top:558px;width:286px;height:26px;background:#ffffff"></div><div class="cell tx" style="left:1151px;top:558px;width:285px;height:25px;line-height:25px;letter-spacing:0.4px;">$7 900</div><div class="glv" style="left:1436px;top:558px;height:26px"></div><div class="glh" style="left:63px;top:583px;width:1263px"></div><div class="cell" style="left:63px;top:584px;width:148px;height:26px;background:#b6d7a8"></div><div class="cell tx" style="left:63px;top:584px;width:147px;height:25px;line-height:25px;">Singapore</div><div class="glv" style="left:210px;top:584px;height:26px"></div><div class="cell" style="left:211px;top:584px;width:311px;height:26px;background:#ffffff"></div><div class="cell tx" style="left:211px;top:584px;width:310px;height:25px;line-height:25px;letter-spacing:0.4px;">67,200 $</div><div class="glv" style="left:521px;top:584px;height:26px"></div><div class="cell" style="left:522px;top:584px;width:126px;height:26px;background:#d9d2e9"></div><div class="cell tx" style="left:522px;top:584px;width:125px;height:25px;line-height:25px;">Slovakia</div><div class="glv" style="left:647px;top:584px;height:26px"></div><div class="cell" style="left:648px;top:584px;width:294px;height:26px;background:#ffffff"></div><div class="cell tx" style="left:648px;top:584px;width:293px;height:25px;line-height:25px;letter-spacing:0.4px;">$23,619</div><div class="glv" style="left:941px;top:584px;height:26px"></div><div class="cell" style="left:942px;top:584px;width:209px;height:26px;background:#fff2cc"></div><div class="cell tx" style="left:942px;top:584px;width:208px;height:25px;line-height:25px;">Colombia</div><div class="glv" style="left:1150px;top:584px;height:26px"></div><div class="cell" style="left:1151px;top:584px;width:286px;height:26px;background:#ffffff"></div><div class="cell tx" style="left:1151px;top:584px;width:285px;height:25px;line-height:25px;letter-spacing:0.4px;">$12 900</div><div class="glv" style="left:1436px;top:584px;height:26px"></div><div class="glh" style="left:63px;top:609px;width:1263px"></div><div class="cell" style="left:63px;top:610px;width:148px;height:26px;background:#b6d7a8"></div><div class="cell tx" style="left:63px;top:610px;width:147px;height:25px;line-height:25px;">Sweden</div><div class="glv" style="left:210px;top:610px;height:26px"></div><div class="cell" style="left:211px;top:610px;width:311px;height:26px;background:#ffffff"></div><div class="cell tx" style="left:211px;top:610px;width:310px;height:25px;line-height:25px;letter-spacing:0.4px;">63,500 $ 47,786 $</div><div class="glv" style="left:521px;top:610px;height:26px"></div><div class="cell" style="left:522px;top:610px;width:126px;height:26px;background:#d9d2e9"></div><div class="cell tx" style="left:522px;top:610px;width:125px;height:25px;line-height:25px;">Latvia</div><div class="glv" style="left:647px;top:610px;height:26px"></div><div class="cell" style="left:648px;top:610px;width:294px;height:26px;background:#ffffff"></div><div class="cell tx" style="left:648px;top:610px;width:293px;height:25px;line-height:25px;letter-spacing:0.4px;">$19,783</div><div class="glv" style="left:941px;top:610px;height:26px"></div><div class="cell" style="left:942px;top:610px;width:209px;height:26px;background:#fff2cc"></div><div class="cell tx" style="left:942px;top:610px;width:208px;height:25px;line-height:25px;">Ecuador</div><div class="glv" style="left:1150px;top:610px;height:26px"></div><div class="cell" style="left:1151px;top:610px;width:286px;height:26px;background:#ffffff"></div><div class="cell tx" style="left:1151px;top:610px;width:285px;height:25px;line-height:25px;letter-spacing:0.4px;">$16 100</div><div class="glv" style="left:1436px;top:610px;height:26px"></div><div class="glh" style="left:63px;top:635px;width:1263px"></div><div class="cell" style="left:63px;top:636px;width:148px;height:26px;background:#b6d7a8"></div><div class="cell tx" style="left:63px;top:636px;width:147px;height:25px;line-height:25px;">Australia</div><div class="glv" style="left:210px;top:636px;height:26px"></div><div class="cell" style="left:211px;top:636px;width:311px;height:26px;background:#ffffff"></div><div class="cell tx" style="left:211px;top:636px;width:310px;height:25px;line-height:25px;letter-spacing:0.4px;">60,840 $ 64,326 $</div><div class="glv" style="left:521px;top:636px;height:26px"></div><div class="cell" style="left:522px;top:636px;width:126px;height:26px;background:#d9d2e9"></div><div class="cell tx" style="left:522px;top:636px;width:125px;height:25px;line-height:25px;">Greece</div><div class="glv" style="left:647px;top:636px;height:26px"></div><div class="cell" style="left:648px;top:636px;width:294px;height:26px;background:#ffffff"></div><div class="cell tx" style="left:648px;top:636px;width:293px;height:25px;line-height:25px;letter-spacing:0.4px;">$20,867</div><div class="glv" style="left:941px;top:636px;height:26px"></div><div class="cell" style="left:942px;top:636px;width:209px;height:26px;background:#fff2cc"></div><div class="cell tx" style="left:942px;top:636px;width:208px;height:25px;line-height:25px;">Puerto Rico</div><div class="glv" style="left:1150px;top:636px;height:26px"></div><div class="cell" style="left:1151px;top:636px;width:286px;height:26px;background:#ffffff"></div><div class="cell tx" style="left:1151px;top:636px;width:285px;height:25px;line-height:25px;letter-spacing:0.4px;">$37 000</div><div class="glv" style="left:1436px;top:636px;height:26px"></div><div class="glh" style="left:63px;top:661px;width:1263px"></div><div class="cell" style="left:63px;top:662px;width:148px;height:26px;background:#b6d7a8"></div><div class="cell tx" style="left:63px;top:662px;width:147px;height:25px;line-height:25px;">Netherlands</div><div class="glv" style="left:210px;top:662px;height:26px"></div><div class="cell" style="left:211px;top:662px;width:311px;height:26px;background:#ffffff"></div><div class="cell tx" style="left:211px;top:662px;width:310px;height:25px;line-height:25px;"></div><div class="glv" style="left:521px;top:662px;height:26px"></div><div class="cell" style="left:522px;top:662px;width:126px;height:26px;background:#d9d2e9"></div><div class="cell tx" style="left:522px;top:662px;width:125px;height:25px;line-height:25px;">Hungary</div><div class="glv" style="left:647px;top:662px;height:26px"></div><div class="cell" style="left:648px;top:662px;width:294px;height:26px;background:#ffffff"></div><div class="cell tx" style="left:648px;top:662px;width:293px;height:25px;line-height:25px;letter-spacing:0.4px;">$19,670</div><div class="glv" style="left:941px;top:662px;height:26px"></div><div class="cell" style="left:942px;top:662px;width:209px;height:26px;background:#fff2cc"></div><div class="cell tx" style="left:942px;top:662px;width:208px;height:25px;line-height:25px;">Armenia</div><div class="glv" style="left:1150px;top:662px;height:26px"></div><div class="cell" style="left:1151px;top:662px;width:286px;height:26px;background:#ffffff"></div><div class="cell tx" style="left:1151px;top:662px;width:285px;height:25px;line-height:25px;letter-spacing:0.4px;">$6700</div><div class="glv" style="left:1436px;top:662px;height:26px"></div><div class="glh" style="left:63px;top:687px;width:1263px"></div><div class="cell" style="left:63px;top:688px;width:148px;height:26px;background:#b6d7a8"></div><div class="cell tx" style="left:63px;top:688px;width:147px;height:25px;line-height:25px;">Austria</div><div class="glv" style="left:210px;top:688px;height:26px"></div><div class="cell" style="left:211px;top:688px;width:311px;height:26px;background:#ffffff"></div><div class="cell tx" style="left:211px;top:688px;width:310px;height:25px;line-height:25px;">tr</div><div class="glv" style="left:521px;top:688px;height:26px"></div><div class="cell" style="left:522px;top:688px;width:126px;height:26px;background:#d9d2e9"></div><div class="cell tx" style="left:522px;top:688px;width:125px;height:25px;line-height:25px;">`</div><div class="glv" style="left:647px;top:688px;height:26px"></div><div class="cell" style="left:648px;top:688px;width:294px;height:26px;background:#ffffff"></div><div class="cell tx" style="left:648px;top:688px;width:293px;height:25px;line-height:25px;letter-spacing:0.4px;">$22,963</div><div class="glv" style="left:941px;top:688px;height:26px"></div><div class="cell" style="left:942px;top:688px;width:209px;height:26px;background:#fff2cc"></div><div class="cell tx" style="left:942px;top:688px;width:208px;height:25px;line-height:25px;">Azerbaijan</div><div class="glv" style="left:1150px;top:688px;height:26px"></div><div class="cell" style="left:1151px;top:688px;width:286px;height:26px;background:#ffffff"></div><div class="cell tx" style="left:1151px;top:688px;width:285px;height:25px;line-height:25px;letter-spacing:0.4px;">$7400</div><div class="glv" style="left:1436px;top:688px;height:26px"></div><div class="glh" style="left:63px;top:713px;width:1263px"></div><div class="cell" style="left:63px;top:714px;width:148px;height:26px;background:#b6d7a8"></div><div class="cell tx" style="left:63px;top:714px;width:147px;height:25px;line-height:25px;">Israel</div><div class="glv" style="left:210px;top:714px;height:26px"></div><div class="cell" style="left:211px;top:714px;width:311px;height:26px;background:#ffffff"></div><div class="cell tx" style="left:211px;top:714px;width:310px;height:25px;line-height:25px;letter-spacing:0.4px;">55,140 $ 49,036 $</div><div class="glv" style="left:521px;top:714px;height:26px"></div><div class="cell" style="left:522px;top:714px;width:126px;height:26px;background:#d9d2e9"></div><div class="cell tx" style="left:522px;top:714px;width:125px;height:25px;line-height:25px;"></div><div class="glv" style="left:647px;top:714px;height:26px"></div><div class="cell" style="left:648px;top:714px;width:294px;height:26px;background:#ffffff"></div><div class="cell tx" style="left:648px;top:714px;width:293px;height:25px;line-height:25px;letter-spacing:0.4px;">$23,340</div><div class="glv" style="left:941px;top:714px;height:26px"></div><div class="cell" style="left:942px;top:714px;width:209px;height:26px;background:#fff2cc"></div><div class="cell tx" style="left:942px;top:714px;width:208px;height:25px;line-height:25px;">Georgia</div><div class="glv" style="left:1150px;top:714px;height:26px"></div><div class="cell" style="left:1151px;top:714px;width:286px;height:26px;background:#ffffff"></div><div class="cell tx" style="left:1151px;top:714px;width:285px;height:25px;line-height:25px;letter-spacing:0.4px;">$11 600</div><div class="glv" style="left:1436px;top:714px;height:26px"></div><div class="glh" style="left:63px;top:739px;width:1263px"></div><div class="cell" style="left:63px;top:740px;width:148px;height:46px;background:#b6d7a8"></div><div class="cell tx" style="left:63px;top:740px;width:147px;height:45px;line-height:45px;">Finland</div><div class="glv" style="left:210px;top:740px;height:46px"></div><div class="cell" style="left:211px;top:740px;width:311px;height:46px;background:#ffffff"></div><div class="cell tx" style="left:211px;top:740px;width:310px;height:45px;line-height:45px;letter-spacing:0.4px;">55,000 $</div><div class="glv" style="left:521px;top:740px;height:46px"></div><div class="cell" style="left:522px;top:740px;width:126px;height:46px;background:#d9d2e9"></div><div class="cell tx" style="left:522px;top:740px;width:125px;height:45px;line-height:45px;">Trinidad</div><div class="glv" style="left:647px;top:740px;height:46px"></div><div class="cell" style="left:648px;top:740px;width:294px;height:46px;background:#ffffff"></div><div class="cell tx" style="left:648px;top:740px;width:293px;height:45px;line-height:45px;letter-spacing:0.4px;">$15,600</div><div class="glv" style="left:941px;top:740px;height:46px"></div><div class="cell" style="left:942px;top:740px;width:209px;height:46px;background:#fff2cc"></div><div class="cell tx" style="left:942px;top:740px;width:208px;height:45px;line-height:45px;">Moldova</div><div class="glv" style="left:1150px;top:740px;height:46px"></div><div class="cell" style="left:1151px;top:740px;width:286px;height:46px;background:#ffffff"></div><div class="cell tx" style="left:1151px;top:740px;width:285px;height:45px;line-height:45px;letter-spacing:0.4px;">$9000</div><div class="glv" style="left:1436px;top:740px;height:46px"></div><div class="glh" style="left:63px;top:785px;width:1263px"></div><div class="cell" style="left:63px;top:786px;width:148px;height:26px;background:#b6d7a8"></div><div class="cell tx" style="left:63px;top:786px;width:147px;height:25px;line-height:25px;">Hong Kong</div><div class="glv" style="left:210px;top:786px;height:26px"></div><div class="cell" style="left:211px;top:786px;width:311px;height:26px;background:#ffffff"></div><div class="cell tx" style="left:211px;top:786px;width:310px;height:25px;line-height:25px;letter-spacing:0.4px;">54,370 $</div><div class="glv" style="left:521px;top:786px;height:26px"></div><div class="cell" style="left:522px;top:786px;width:126px;height:26px;background:#d9d2e9"></div><div class="cell tx" style="left:522px;top:786px;width:125px;height:25px;line-height:25px;">Bulgaria</div><div class="glv" style="left:647px;top:786px;height:26px"></div><div class="cell" style="left:648px;top:786px;width:294px;height:26px;background:#ffffff"></div><div class="cell tx" style="left:648px;top:786px;width:293px;height:25px;line-height:25px;letter-spacing:0.4px;">$26,729</div><div class="glv" style="left:941px;top:786px;height:26px"></div><div class="cell" style="left:942px;top:786px;width:209px;height:26px;background:#fff2cc"></div><div class="cell tx" style="left:942px;top:786px;width:208px;height:25px;line-height:25px;">Iraq</div><div class="glv" style="left:1150px;top:786px;height:26px"></div><div class="cell" style="left:1151px;top:786px;width:286px;height:26px;background:#ffffff"></div><div class="cell tx" style="left:1151px;top:786px;width:285px;height:25px;line-height:25px;letter-spacing:0.4px;">$7 900</div><div class="glv" style="left:1436px;top:786px;height:26px"></div><div class="glh" style="left:63px;top:811px;width:1263px"></div><div class="cell" style="left:63px;top:812px;width:148px;height:26px;background:#b6d7a8"></div><div class="cell tx" style="left:63px;top:812px;width:147px;height:25px;line-height:25px;">Germany</div><div class="glv" style="left:210px;top:812px;height:26px"></div><div class="cell" style="left:211px;top:812px;width:311px;height:26px;background:#ffffff"></div><div class="cell tx" style="left:211px;top:812px;width:310px;height:25px;line-height:25px;letter-spacing:0.4px;">54,030 $ 47,836 $</div><div class="glv" style="left:521px;top:812px;height:26px"></div><div class="cell" style="left:522px;top:812px;width:126px;height:26px;background:#d9d2e9"></div><div class="cell tx" style="left:522px;top:812px;width:125px;height:25px;line-height:25px;">Bulgaria</div><div class="glv" style="left:647px;top:812px;height:26px"></div><div class="cell" style="left:648px;top:812px;width:294px;height:26px;background:#ffffff"></div><div class="cell tx" style="left:648px;top:812px;width:293px;height:25px;line-height:25px;letter-spacing:0.4px;">$15,353</div><div class="glv" style="left:941px;top:812px;height:26px"></div><div class="cell" style="left:942px;top:812px;width:209px;height:26px;background:#fff2cc"></div><div class="cell tx" style="left:942px;top:812px;width:208px;height:25px;line-height:25px;">Palestine</div><div class="glv" style="left:1150px;top:812px;height:26px"></div><div class="cell" style="left:1151px;top:812px;width:286px;height:26px;background:#ffffff"></div><div class="cell tx" style="left:1151px;top:812px;width:285px;height:25px;line-height:25px;">Nil</div><div class="glv" style="left:1436px;top:812px;height:26px"></div><div class="glh" style="left:63px;top:837px;width:1263px"></div><div class="bk" style="left:210px;top:277px;width:1px;height:560px"></div><div class="bk" style="left:521px;top:232px;width:1px;height:605px"></div><div class="bk" style="left:647px;top:277px;width:1px;height:560px"></div><div class="bk" style="left:941px;top:277px;width:1px;height:560px"></div><div class="bk" style="left:1150px;top:277px;width:1px;height:560px"></div><div class="bk" style="left:941px;top:277px;width:385px;height:1px"></div><div class="bk" style="left:521px;top:355px;width:421px;height:1px"></div><div class="bk" style="left:521px;top:381px;width:421px;height:1px"></div><div class="bk" style="left:63px;top:206px;width:147px;height:1.5px;background:#1a6be6"></div><div class="bk" style="left:63px;top:230px;width:147px;height:2px;background:#1a6be6"></div><div class="bk" style="left:208px;top:206px;width:2px;height:26px;background:#1a6be6"></div><div class="handle" style="left:204px;top:226px"></div><div class="hscroll" style="top:836px"></div><div class="rhbot" style="top:836px"></div><div class="thumb" style="top:838px"></div></div>
</body></html>
